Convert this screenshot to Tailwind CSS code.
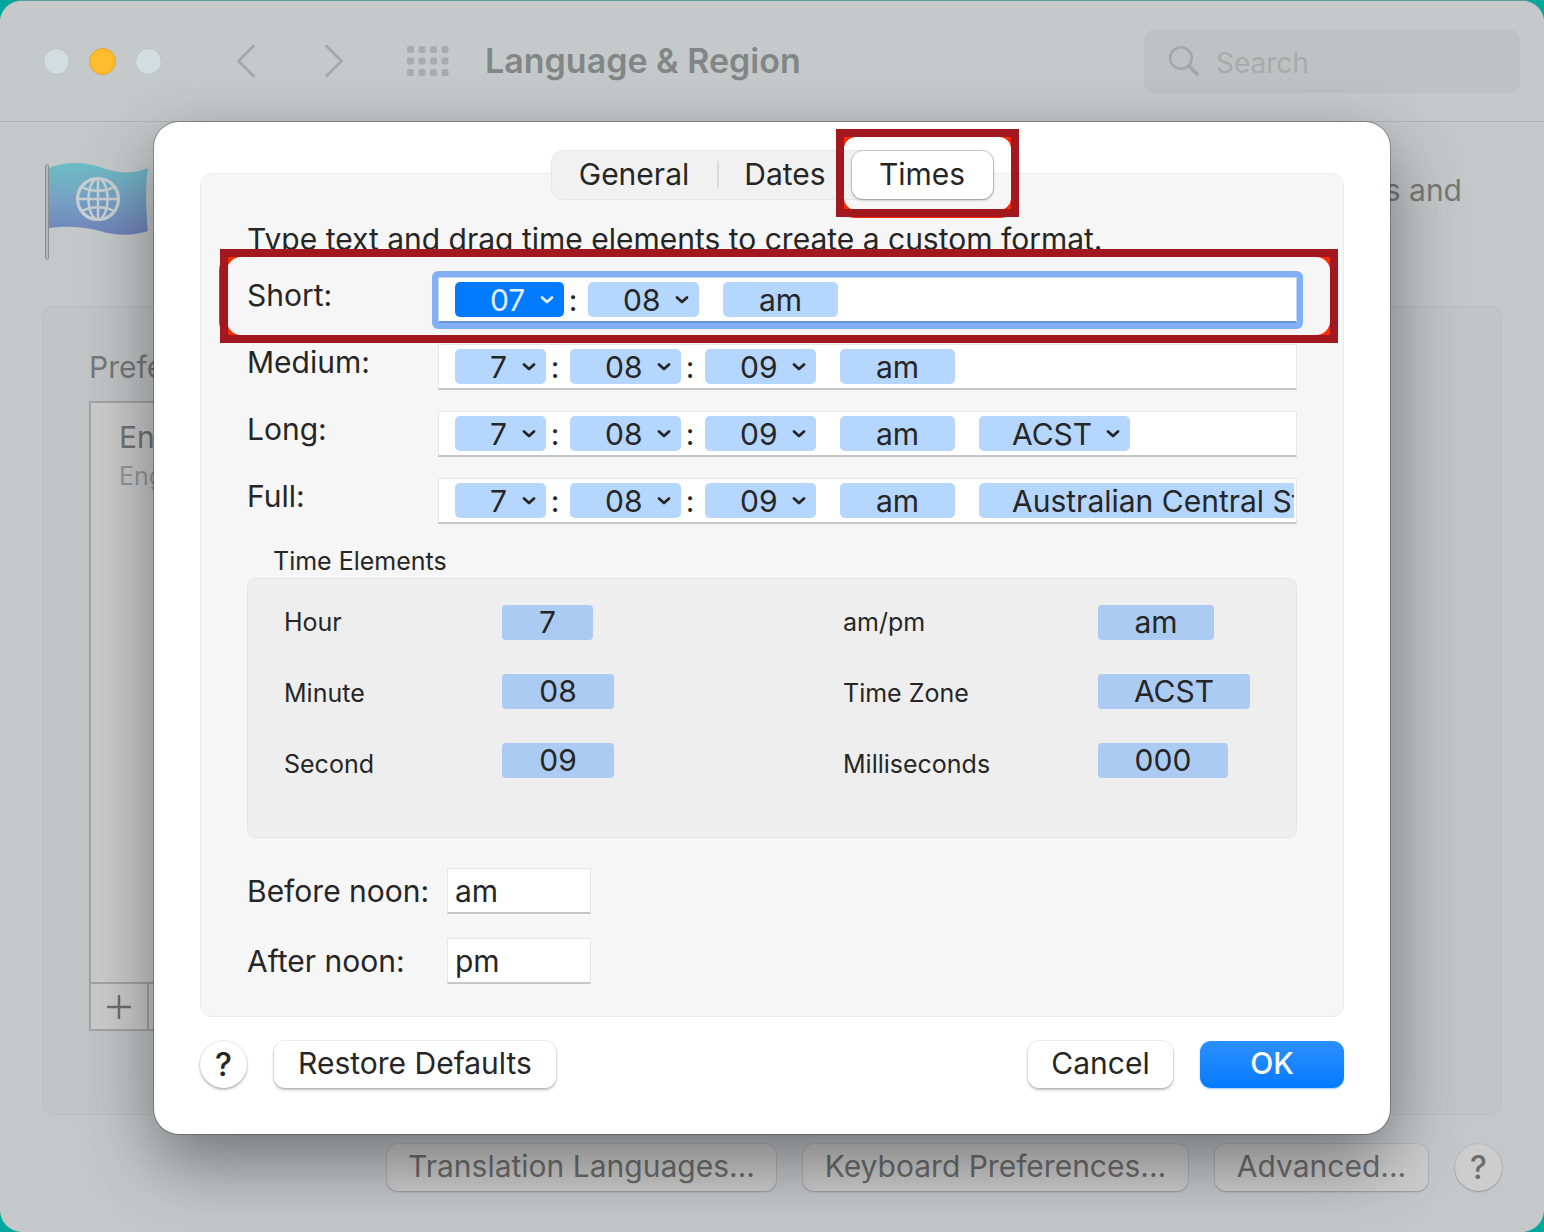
<!DOCTYPE html>
<html lang="en">

<head>
    <meta charset="UTF-8">
    <meta name="viewport" content="width=device-width, initial-scale=1.0">
    <title>Language &amp; Region</title>
    <script src="https://cdn.jsdelivr.net/npm/@tailwindcss/browser@4"></script>
</head>

<body class="bg-[#00a79d] font-['Inter','Liberation_Sans',sans-serif] text-[30px] leading-9 text-[#262626]">
    <svg class="hidden">
        <symbol id="chevron" viewBox="0 0 16 10">
            <path d="M3 2.500 8 7l5-4.500" fill="none" stroke="currentColor" stroke-width="2.800" stroke-linecap="round" stroke-linejoin="round" />
        </symbol>
    </svg>

    <div id="window" class="flex flex-col min-h-screen overflow-hidden rounded-[22px] border-t border-[#5c9c98] bg-[#c4c8c8]">
        <!-- Toolbar -->
        <header class="flex items-center h-[121px] pl-[43px] pr-6 border-b border-[#b0b3b3] bg-[#c5c9c9]">
            <div class="flex gap-[19px]">
                <button aria-label="Close" class="size-[27px] rounded-full border border-[#b9c2c2] bg-[#d3dcde]"></button>
                <button aria-label="Minimise" class="size-[27px] rounded-full border border-[#e0a32c] bg-[#ffbd2e]"></button>
                <button aria-label="Zoom" class="size-[27px] rounded-full border border-[#b9c2c2] bg-[#d3dcde]"></button>
            </div>
            <button aria-label="Back" class="ml-[74px] text-[#a6a9a9]">
                <svg class="w-5 h-9" viewBox="0 0 20 36" fill="none" stroke="currentColor" stroke-width="3" stroke-linecap="round" stroke-linejoin="round"><path d="M17.500 3 2.500 18l15 15" /></svg>
            </button>
            <button aria-label="Forward" class="ml-[68px] text-[#a6a9a9]">
                <svg class="w-5 h-9" viewBox="0 0 20 36" fill="none" stroke="currentColor" stroke-width="3" stroke-linecap="round" stroke-linejoin="round"><path d="M2.500 3l15 15-15 15" /></svg>
            </button>
            <button aria-label="Show all" class="ml-[63px] text-[#a9acac]">
                <svg class="w-[42px] h-[30px]" viewBox="0 0 42 30" fill="currentColor">
                    <rect x="0" y="0" width="7" height="7" rx="2" /><rect x="11.500" y="0" width="7" height="7" rx="2" /><rect x="23" y="0" width="7" height="7" rx="2" /><rect x="34.500" y="0" width="7" height="7" rx="2" />
                    <rect x="0" y="11.500" width="7" height="7" rx="2" /><rect x="11.500" y="11.500" width="7" height="7" rx="2" /><rect x="23" y="11.500" width="7" height="7" rx="2" /><rect x="34.500" y="11.500" width="7" height="7" rx="2" />
                    <rect x="0" y="23" width="7" height="7" rx="2" /><rect x="11.500" y="23" width="7" height="7" rx="2" /><rect x="23" y="23" width="7" height="7" rx="2" /><rect x="34.500" y="23" width="7" height="7" rx="2" />
                </svg>
            </button>
            <h1 class="ml-9 text-[34px] font-semibold text-[#838686]">Language &amp; Region</h1>
            <label class="flex items-center gap-4 w-[376px] h-16 ml-auto pl-6 rounded-xl bg-[#bec2c2] text-[#a4a7a7]">
                <svg class="size-8 shrink-0" viewBox="0 0 32 32" fill="none" stroke="currentColor" stroke-width="2.500" stroke-linecap="round"><circle cx="13" cy="13" r="10.800" /><path d="M21 21l8 8" stroke-width="3.500" /></svg>
                <input type="search" aria-label="Search" placeholder="Search" class="w-full pt-1 bg-transparent text-[28px] outline-none placeholder:text-[#a8abab]">
            </label>
        </header>

        <main class="relative flex-1 flex flex-col px-[42px] pb-[41px]">
            <div class="flex items-start justify-between h-[184px] pt-[38px]">
                <svg class="w-[110px] h-[104px]" viewBox="0 0 110 104">
                    <defs>
                        <linearGradient id="flag" x1="0" y1="0" x2="0" y2="1">
                            <stop offset="0" stop-color="#6dbcc5" />
                            <stop offset=".45" stop-color="#76a5c4" />
                            <stop offset="1" stop-color="#7183bb" />
                        </linearGradient>
                    </defs>
                    <rect x="3.500" y="5" width="3" height="94" rx="1" fill="#b5b8b8" stroke="#8b8e8e" />
                    <path d="M7 8c12-5 30-8 51-1 17 6 29 8 48 1-3 20-2 42 0 63-16 5-31 5-48 0-19-5-34-5-51-3z" fill="url(#flag)" />
                    <g fill="none" stroke="#c9cfd2" stroke-width="2.500">
                        <circle cx="56" cy="39" r="20.500" stroke-width="3.200" />
                        <ellipse cx="56" cy="39" rx="9.500" ry="20.500" />
                        <path d="M56 18.500v41M35.500 39h41M40 27c9 5 23 5 32 0M40 51c9-5 23-5 32 0" />
                    </g>
                </svg>
                <p class="pt-3 pr-10 text-[#777979]">menus and</p>
            </div>

            <section class="flex-1 flex flex-col pt-[42px] pb-[83px] px-[46px] rounded-xl border border-[#babebe] bg-[#c1c5c5]">
                <h2 class="text-[#777979]">Preferred</h2>
                <div class="flex-1 flex flex-col w-80 mt-4 border-2 border-[#a3a3a3] bg-[#cbcbcb]">
                    <div class="flex-1 pt-4 pl-7">
                        <p class="text-[#737373]">English</p>
                        <p class="mt-[3px] text-[25px] text-[#989898]">English</p>
                    </div>
                    <div class="flex h-[47px] border-t-2 border-[#a3a3a3]">
                        <button aria-label="Add" class="flex items-center justify-center w-[58px] border-r-2 border-[#a3a3a3] text-[#6d6d6d]">
                            <svg class="size-6" viewBox="0 0 24 24" stroke="currentColor" stroke-width="2.500" stroke-linecap="round"><path d="M12 1v22M1 12h22" /></svg>
                        </button>
                    </div>
                </div>
            </section>

            <div class="flex justify-end gap-[27px] mt-[29px] text-[#6d6d6d]">
                <button class="w-[389px] h-[47px] pb-[3px] rounded-[11px] bg-[#cdcdcd] shadow-[0_0_0_1px_rgba(0,0,0,0.05),0_1px_2px_rgba(0,0,0,0.2)]">Translation Languages...</button>
                <button class="w-[385px] h-[47px] pb-[3px] rounded-[11px] bg-[#cdcdcd] shadow-[0_0_0_1px_rgba(0,0,0,0.05),0_1px_2px_rgba(0,0,0,0.2)]">Keyboard Preferences...</button>
                <button class="w-[213px] h-[47px] pb-[3px] rounded-[11px] bg-[#cdcdcd] shadow-[0_0_0_1px_rgba(0,0,0,0.05),0_1px_2px_rgba(0,0,0,0.2)]">Advanced...</button>
                <button aria-label="Help" class="size-[47px] rounded-full bg-[#cdcdcd] text-[32px] font-medium shadow-[0_0_0_1px_rgba(0,0,0,0.05),0_1px_2px_rgba(0,0,0,0.2)]">?</button>
            </div>

            <!-- Time format sheet -->
            <div role="dialog" aria-label="Times" class="absolute top-0 inset-x-[154px] pt-7 px-[46px] pb-[46px] rounded-[25px] bg-white shadow-[0_0_0_1px_rgba(0,0,0,0.25),0_28px_70px_rgba(0,0,0,0.42)]">
                <div role="tablist" class="relative z-10 flex w-fit h-[50px] mx-auto rounded-xl border border-[#e7e7e7] bg-[#f1f1f1]">
                    <button role="tab" class="w-[165px] pb-[2px]">General</button>
                    <span class="w-[2px] h-7 my-auto bg-[#dcdcdc]"></span>
                    <button role="tab" class="w-[133px] pb-[2px]">Dates</button>
                    <button role="tab" aria-selected="true" class="relative w-[141px] pb-[2px] rounded-[11px] bg-white shadow-[0_0_0_1px_rgba(0,0,0,0.1),0_1px_3px_rgba(0,0,0,0.3)]">
                        Times
                        <span class="absolute -top-[22px] -bottom-[19px] -left-4 -right-[26px] border-8 border-[#ff2a00] rounded-[20px]"></span>
                        <span class="absolute -top-[22px] -bottom-[18px] -left-4 -right-[26px] border-8 border-[#a3181e]"></span>
                    </button>
                </div>

                <section class="-mt-[27px] pt-[47px] px-[46px] pb-8 rounded-xl border border-[#ebebeb] bg-[#f6f6f6]">
                    <p>Type text and drag time elements to create a custom format.</p>

                    <div class="flex flex-col gap-[21px] mt-5">
                        <div class="relative flex h-[46px]">
                            <label for="short-hour" class="w-[191px] shrink-0">Short:</label>
                            <div class="flex-1 flex pt-1 pl-4 bg-white border border-[#c3d9f8] border-b-2 border-b-[#6594db] ring-6 ring-[#82aff6] rounded-xs">
                                <span class="relative">
                                    <select id="short-hour" class="appearance-none w-[109px] h-[35px] pl-[35px] rounded-[5px] bg-[#007aff] text-[#e3efff]"><option>07</option></select>
                                    <svg class="absolute right-[9px] top-[13px] w-4 h-[10px] text-[#e3efff] pointer-events-none"><use href="#chevron" /></svg>
                                </span>
                                <span class="w-6 pr-[6px] text-center">:</span>
                                <span class="relative">
                                    <select aria-label="Short minute" class="appearance-none w-[111px] h-[35px] pl-[35px] rounded-[5px] bg-[#b5d6fe]"><option>08</option></select>
                                    <svg class="absolute right-[9px] top-[13px] w-4 h-[10px] pointer-events-none"><use href="#chevron" /></svg>
                                </span>
                                <button class="w-[115px] h-[35px] ml-6 rounded-[5px] bg-[#b5d6fe]">am</button>
                            </div>
                            <span class="absolute -top-[28px] -bottom-[20px] -left-7 -right-[41px] border-8 border-[#ff2a00] rounded-[22px] pointer-events-none"></span>
                            <span class="absolute -top-[28px] -bottom-[20px] -left-[27px] -right-[41px] border-8 border-[#a3181e] pointer-events-none"></span>
                        </div>

                        <div class="flex h-[46px]">
                            <label for="medium-hour" class="w-[191px] shrink-0">Medium:</label>
                            <div class="flex-1 flex pt-1 pl-4 bg-white border border-[#e6e6e6] border-b-2 border-b-[#c6c6c6]">
                                <span class="relative">
                                    <select id="medium-hour" class="appearance-none w-[91px] h-[35px] pl-[35px] rounded-[5px] bg-[#b5d6fe]"><option>7</option></select>
                                    <svg class="absolute right-[9px] top-[13px] w-4 h-[10px] pointer-events-none"><use href="#chevron" /></svg>
                                </span>
                                <span class="w-6 pr-[6px] text-center">:</span>
                                <span class="relative">
                                    <select aria-label="Medium minute" class="appearance-none w-[111px] h-[35px] pl-[35px] rounded-[5px] bg-[#b5d6fe]"><option>08</option></select>
                                    <svg class="absolute right-[9px] top-[13px] w-4 h-[10px] pointer-events-none"><use href="#chevron" /></svg>
                                </span>
                                <span class="w-6 pr-[6px] text-center">:</span>
                                <span class="relative">
                                    <select aria-label="Medium second" class="appearance-none w-[111px] h-[35px] pl-[35px] rounded-[5px] bg-[#b5d6fe]"><option>09</option></select>
                                    <svg class="absolute right-[9px] top-[13px] w-4 h-[10px] pointer-events-none"><use href="#chevron" /></svg>
                                </span>
                                <button class="w-[115px] h-[35px] ml-6 rounded-[5px] bg-[#b5d6fe]">am</button>
                            </div>
                        </div>

                        <div class="flex h-[46px]">
                            <label for="long-hour" class="w-[191px] shrink-0">Long:</label>
                            <div class="flex-1 flex pt-1 pl-4 bg-white border border-[#e6e6e6] border-b-2 border-b-[#c6c6c6]">
                                <span class="relative">
                                    <select id="long-hour" class="appearance-none w-[91px] h-[35px] pl-[35px] rounded-[5px] bg-[#b5d6fe]"><option>7</option></select>
                                    <svg class="absolute right-[9px] top-[13px] w-4 h-[10px] pointer-events-none"><use href="#chevron" /></svg>
                                </span>
                                <span class="w-6 pr-[6px] text-center">:</span>
                                <span class="relative">
                                    <select aria-label="Long minute" class="appearance-none w-[111px] h-[35px] pl-[35px] rounded-[5px] bg-[#b5d6fe]"><option>08</option></select>
                                    <svg class="absolute right-[9px] top-[13px] w-4 h-[10px] pointer-events-none"><use href="#chevron" /></svg>
                                </span>
                                <span class="w-6 pr-[6px] text-center">:</span>
                                <span class="relative">
                                    <select aria-label="Long second" class="appearance-none w-[111px] h-[35px] pl-[35px] rounded-[5px] bg-[#b5d6fe]"><option>09</option></select>
                                    <svg class="absolute right-[9px] top-[13px] w-4 h-[10px] pointer-events-none"><use href="#chevron" /></svg>
                                </span>
                                <button class="w-[115px] h-[35px] ml-6 rounded-[5px] bg-[#b5d6fe]">am</button>
                                <span class="relative ml-6">
                                    <select aria-label="Long time zone" class="appearance-none w-[151px] h-[35px] pl-[33px] rounded-[5px] bg-[#b5d6fe]"><option>ACST</option></select>
                                    <svg class="absolute right-[9px] top-[13px] w-4 h-[10px] pointer-events-none"><use href="#chevron" /></svg>
                                </span>
                            </div>
                        </div>

                        <div class="flex h-[46px]">
                            <label for="full-hour" class="w-[191px] shrink-0">Full:</label>
                            <div class="flex-1 min-w-0 flex pt-1 pl-4 pr-[2px] bg-white border border-[#e6e6e6] border-b-2 border-b-[#c6c6c6]">
                                <span class="relative">
                                    <select id="full-hour" class="appearance-none w-[91px] h-[35px] pl-[35px] rounded-[5px] bg-[#b5d6fe]"><option>7</option></select>
                                    <svg class="absolute right-[9px] top-[13px] w-4 h-[10px] pointer-events-none"><use href="#chevron" /></svg>
                                </span>
                                <span class="w-6 pr-[6px] text-center">:</span>
                                <span class="relative">
                                    <select aria-label="Full minute" class="appearance-none w-[111px] h-[35px] pl-[35px] rounded-[5px] bg-[#b5d6fe]"><option>08</option></select>
                                    <svg class="absolute right-[9px] top-[13px] w-4 h-[10px] pointer-events-none"><use href="#chevron" /></svg>
                                </span>
                                <span class="w-6 pr-[6px] text-center">:</span>
                                <span class="relative">
                                    <select aria-label="Full second" class="appearance-none w-[111px] h-[35px] pl-[35px] rounded-[5px] bg-[#b5d6fe]"><option>09</option></select>
                                    <svg class="absolute right-[9px] top-[13px] w-4 h-[10px] pointer-events-none"><use href="#chevron" /></svg>
                                </span>
                                <button class="w-[115px] h-[35px] ml-6 shrink-0 rounded-[5px] bg-[#b5d6fe]">am</button>
                                <span class="flex-1 min-w-0 h-[35px] ml-6 overflow-hidden">
                                    <select aria-label="Full time zone" class="appearance-none w-[540px] h-[35px] pl-[33px] rounded-[5px] bg-[#b5d6fe]"><option>Australian Central Standard Time</option></select>
                                </span>
                            </div>
                        </div>
                    </div>

                    <h2 class="mt-5 pl-[26px] text-[25px] leading-[34px]">Time Elements</h2>
                    <div class="grid grid-cols-[218px_1fr_255px_162px] h-[260px] pt-[26px] px-9 rounded-[10px] border border-[#e3e3e3] bg-[#eeeeee]">
                        <div class="flex flex-col gap-9 text-[25px] leading-[35px]">
                            <label for="el-hour">Hour</label>
                            <label for="el-minute">Minute</label>
                            <label for="el-second">Second</label>
                        </div>
                        <div class="flex flex-col gap-[34px] leading-[35px]">
                            <button id="el-hour" class="w-[91px] h-[35px] rounded-[4px] bg-[#accbf3]">7</button>
                            <button id="el-minute" class="w-[112px] h-[35px] rounded-[4px] bg-[#accbf3]">08</button>
                            <button id="el-second" class="w-[112px] h-[35px] rounded-[4px] bg-[#accbf3]">09</button>
                        </div>
                        <div class="flex flex-col gap-9 text-[25px] leading-[35px]">
                            <label for="el-ampm">am/pm</label>
                            <label for="el-zone">Time Zone</label>
                            <label for="el-ms">Milliseconds</label>
                        </div>
                        <div class="flex flex-col gap-[34px] leading-[35px]">
                            <button id="el-ampm" class="w-[116px] h-[35px] rounded-[4px] bg-[#accbf3]">am</button>
                            <button id="el-zone" class="w-[152px] h-[35px] rounded-[4px] bg-[#accbf3]">ACST</button>
                            <button id="el-ms" class="w-[130px] h-[35px] rounded-[4px] bg-[#accbf3]">000</button>
                        </div>
                    </div>

                    <div class="flex items-center mt-[30px]">
                        <label for="before-noon" class="w-[200px]">Before noon:</label>
                        <input id="before-noon" type="text" value="am" class="w-36 h-[46px] px-[7px] bg-white border border-[#e6e6e6] border-b-2 border-b-[#c6c6c6] outline-none">
                    </div>
                    <div class="flex items-center mt-6">
                        <label for="after-noon" class="w-[200px]">After noon:</label>
                        <input id="after-noon" type="text" value="pm" class="w-36 h-[46px] px-[7px] bg-white border border-[#e6e6e6] border-b-2 border-b-[#c6c6c6] outline-none">
                    </div>
                </section>

                <div class="flex gap-[27px] mt-6">
                    <button aria-label="Help" class="size-[47px] rounded-full bg-white text-[32px] font-medium shadow-[0_0_0_1px_rgba(0,0,0,0.07),0_2px_3px_rgba(0,0,0,0.25)]">?</button>
                    <button class="w-[282px] h-[47px] pb-[3px] rounded-[11px] bg-white shadow-[0_0_0_1px_rgba(0,0,0,0.07),0_2px_3px_rgba(0,0,0,0.25)]">Restore Defaults</button>
                    <button class="w-[145px] h-[47px] pb-[3px] ml-auto rounded-[11px] bg-white shadow-[0_0_0_1px_rgba(0,0,0,0.07),0_2px_3px_rgba(0,0,0,0.25)]">Cancel</button>
                    <button class="w-36 h-[47px] pb-[3px] rounded-[11px] bg-linear-to-b from-[#2b90ff] to-[#007aff] font-medium text-white shadow-[0_1px_2px_rgba(0,122,255,0.4)]">OK</button>
                </div>
            </div>
        </main>
    </div>
</body>

</html>
